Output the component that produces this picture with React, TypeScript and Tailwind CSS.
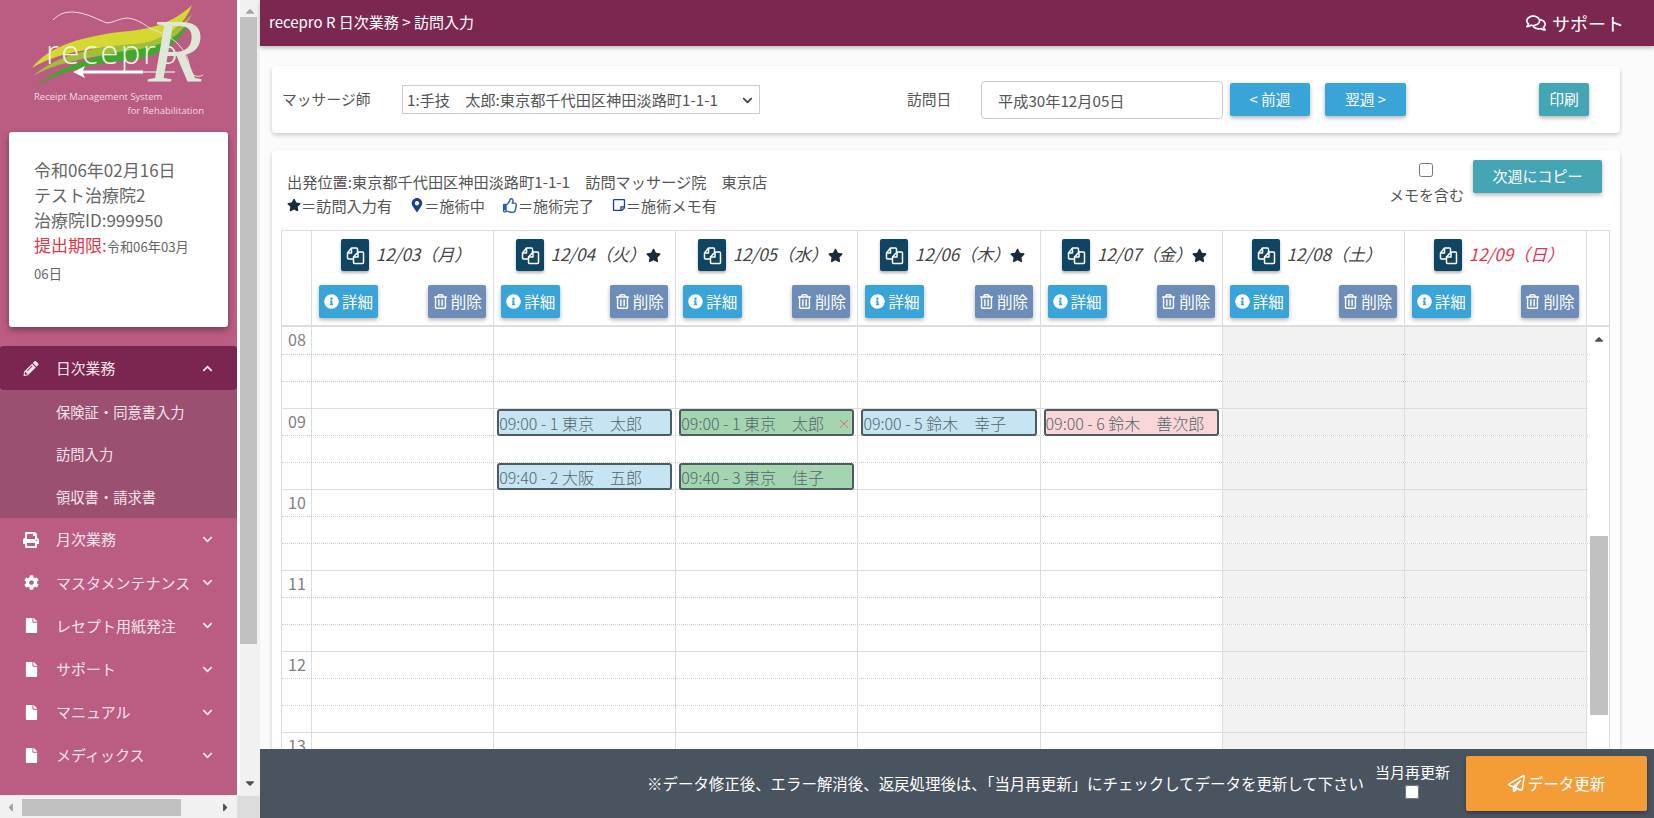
import {
  FaCaretDown,
  FaCaretLeft,
  FaCaretRight,
  FaCaretUp,
  FaChevronDown,
  FaChevronUp,
  FaCog,
  FaFile,
  FaInfoCircle,
  FaMapMarkerAlt,
  FaPencilAlt,
  FaPrint,
  FaRegComments,
  FaRegPaperPlane,
  FaRegStickyNote,
  FaRegThumbsUp,
  FaRegTrashAlt,
  FaStar,
} from "react-icons/fa";

const jp = "font-['Noto_Sans_CJK_JP','Noto_Sans',sans-serif]";

const days = [
  { date: "12/03", wd: "月", star: false, off: false, red: false },
  { date: "12/04", wd: "火", star: true, off: false, red: false },
  { date: "12/05", wd: "水", star: true, off: false, red: false },
  { date: "12/06", wd: "木", star: true, off: false, red: false },
  { date: "12/07", wd: "金", star: true, off: false, red: false },
  { date: "12/08", wd: "土", star: false, off: true, red: false },
  { date: "12/09", wd: "日", star: false, off: true, red: true },
];

type Ev = { label: string; tone: string; cancel?: boolean };

const blue = "bg-[#c6e4f1]";
const green = "bg-[#a5d4b0]";
const pink = "bg-[#fad6d9]";

// key: day index - row index (row 0 = 08:00, 20 min per row)
const events: Record<string, Ev> = {
  "1-3": { label: "09:00 - 1 東京　太郎", tone: blue },
  "2-3": { label: "09:00 - 1 東京　太郎", tone: green, cancel: true },
  "3-3": { label: "09:00 - 5 鈴木　幸子", tone: blue },
  "4-3": { label: "09:00 - 6 鈴木　善次郎", tone: pink },
  "1-5": { label: "09:40 - 2 大阪　五郎", tone: blue },
  "2-5": { label: "09:40 - 3 東京　佳子", tone: green },
};

const rows = Array.from({ length: 16 }, (_, i) => i);

const menu = [
  { label: "月次業務", icon: <FaPrint size={16} /> },
  { label: "マスタメンテナンス", icon: <FaCog size={15} /> },
  { label: "レセプト用紙発注", icon: <FaFile size={15} /> },
  { label: "サポート", icon: <FaFile size={15} /> },
  { label: "マニュアル", icon: <FaFile size={15} /> },
  { label: "メディックス", icon: <FaFile size={15} /> },
];

function Logo() {
  return (
    <div className="relative h-[132px] w-full shrink-0">
      <svg className="absolute inset-0" width="237" height="100" viewBox="0 0 237 100">
        <path d="M32 68C48 46 85 35 130 31C160 28 178 18 192 5C184 26 165 42 135 45C90 47 55 54 32 68Z" fill="#d5d832" />
        <path d="M33 76C55 56 95 46 135 44C160 42 180 28 192 14C182 36 160 50 135 52C95 55 58 62 33 76Z" fill="#9fbf3c" />
        <path d="M36 87C55 68 95 54 140 49C162 46 178 36 190 23C178 46 155 56 135 60C95 63 60 70 36 87Z" fill="#3fa82e" />
        <path d="M53 20C60 13 66 12 73 12C88 13 98 20 107 23C113 23 120 18 127 18C138 19 143 24 150 28C162 33 172 38 177 43C184 50 188 58 188 60C190 66 190 70 190 73C195 77 200 77 203 75" fill="none" stroke="#f6dce6" strokeWidth="1" />
        <path d="M73 72L85 66L83 70.500H143V71.500H175V72.500H143V73.500H83L85 78Z" fill="#ffffff" />
      </svg>
      <span className="absolute left-[46px] top-[30px] font-['Open_Sans',sans-serif] text-[33px] font-light leading-[44px] tracking-[2.5px] text-[#eef6e0]">
        recepro
      </span>
      <span className="absolute left-[148px] top-[2px] font-['Liberation_Serif',serif] text-[90px] italic leading-[100px] text-[#dfe8d6]">
        R
      </span>
      <div className="absolute left-[34px] top-[90px] w-[170px] font-['Open_Sans',sans-serif] text-[9.5px] leading-[14px] text-[#f3d9e4]">
        <div>Receipt Management System</div>
        <div className="text-right">for Rehabilitation</div>
      </div>
    </div>
  );
}

function Sidebar() {
  return (
    <div className="flex h-full w-[260px] shrink-0 flex-col bg-white">
      <div className="flex min-h-0 flex-1">
        <nav className="flex w-[237px] flex-col bg-[#bb5c82] text-[#f7e3eb]">
          <Logo />
          <div className="mx-[9px] h-[195px] w-[219px] rounded-[3px] bg-white pl-[25px] pt-[25px] text-[17px] leading-[25px] text-[#666666] shadow-[0_3px_6px_rgba(0,0,0,0.35)]">
            <div>令和06年02月16日</div>
            <div>テスト治療院2</div>
            <div>治療院ID:999950</div>
            <div className="w-[165px]">
              <span className="text-[#e0374f]">提出期限:</span>
              <span className="text-[13.2px]">令和06年03月06日</span>
            </div>
          </div>
          <div className="mt-[19px] flex h-[44px] items-center rounded-[3px] bg-[#7b2650] pl-[23px] pr-[24px] text-[14.8px]">
            <FaPencilAlt size={15} className="w-[16px] text-[#f7e3eb]" />
            <span className="ml-[17px] flex-1">日次業務</span>
            <FaChevronUp size={11} />
          </div>
          <div className="flex h-[128px] flex-col justify-around bg-[#9b5072] pl-[56px] text-[14.3px]">
            <span>保険証・同意書入力</span>
            <span>訪問入力</span>
            <span>領収書・請求書</span>
          </div>
          <div className="flex flex-col">
            {menu.map((m) => (
              <div key={m.label} className="flex h-[43.2px] items-center pl-[23px] pr-[24px] text-[15px]">
                <span className="flex w-[16px] justify-center text-white">{m.icon}</span>
                <span className="ml-[17px] flex-1 whitespace-nowrap">{m.label}</span>
                <FaChevronDown size={11} />
              </div>
            ))}
          </div>
        </nav>
        <div className="ml-[3px] flex w-[20px] flex-col items-center bg-[#f1f1f1]">
          <FaCaretUp size={14} className="mt-[4px] text-[#a3a3a3]" />
          <div className="ml-[-3px] mt-[-1px] h-[627px] w-[17px] bg-[#c1c1c1]" />
          <div className="flex-1" />
          <FaCaretDown size={14} className="mb-[5px] text-[#505050]" />
        </div>
      </div>
      <div className="flex h-[23px] border-t border-[#ececec]">
        <div className="flex w-[237px] items-center bg-[#f1f1f1]">
          <FaCaretLeft size={13} className="ml-[4px] text-[#a3a3a3]" />
          <div className="ml-[5px] h-[17px] w-[159px] bg-[#c1c1c1]" />
          <div className="flex-1" />
          <FaCaretRight size={13} className="mr-[5px] text-[#505050]" />
        </div>
        <div className="flex-1 bg-[#dcdcdc]" />
      </div>
    </div>
  );
}

function BlockBtn({ children, className }: { children: React.ReactNode; className: string }) {
  return (
    <button className={`flex items-center justify-center rounded-[2px] text-white shadow-[0_2px_4px_rgba(0,0,0,0.3)] ${className}`}>
      {children}
    </button>
  );
}

// two overlapping sheets with folded corners
function CopyIcon() {
  return (
    <svg width="20" height="20" viewBox="0 0 20 20" fill="none" stroke="currentColor" strokeWidth="1.5" strokeLinejoin="round">
      <path d="M8 14H3.500a1 1 0 0 1-1-1V8l4-5h5a1 1 0 0 1 1 1v3" />
      <path d="M6.500 3v5h-4" />
      <path d="M13 7h4.500a1 1 0 0 1 1 1v9.500a1 1 0 0 1-1 1h-8a1 1 0 0 1-1-1V12z" />
      <path d="M13 7v5H8.500" />
    </svg>
  );
}

function DayHeader({ day }: { day: (typeof days)[number] }) {
  return (
    <div className="flex h-[94px] w-[182.15px] shrink-0 flex-col border-r border-[#dddddd] px-[7px] pt-[8px]">
      <div className="flex h-[32px] items-center justify-center pl-[7px]">
        <div className="flex h-[32px] w-[28px] items-center justify-center rounded-[2px] bg-[#0f4463] text-white shadow-[0_2px_3px_rgba(0,0,0,0.3)]">
          <CopyIcon />
        </div>
        <span className={`ml-[7px] pb-[3px] text-[17px] italic ${day.red ? "text-[#e0374f]" : "text-[#444444]"}`}>
          {day.date}（{day.wd}）
        </span>
        {day.star && <FaStar size={15} className="text-[#1c2b3a]" />}
      </div>
      <div className="mt-[14px] flex justify-between">
        <BlockBtn className="h-[33px] w-[59px] gap-[3px] bg-[#39a4d8] text-[15.5px]">
          <FaInfoCircle size={15} />
          詳細
        </BlockBtn>
        <BlockBtn className="h-[33px] w-[58px] gap-[3px] bg-[#6d8db8] text-[15.5px]">
          <FaRegTrashAlt size={15} />
          削除
        </BlockBtn>
      </div>
    </div>
  );
}

function Calendar() {
  return (
    <div className="ml-[9px] mr-[10px] flex min-h-0 flex-1 flex-col overflow-hidden border-l border-t border-[#dddddd]">
      <div className="flex border-b-2 border-[#dddddd]">
        <div className="w-[30px] shrink-0 border-r border-[#dddddd]" />
        {days.map((d) => (
          <DayHeader key={d.date} day={d} />
        ))}
        <div className="flex-1 border-r border-[#dddddd]" />
      </div>
      <div className="flex min-h-0 flex-1 border-r border-[#dddddd]">
        <div className="min-w-0 flex-1">
          {rows.map((r) => (
            <div
              key={r}
              className={`flex h-[27px] ${
                r % 3 === 0 ? "border-t border-solid border-[#dddddd]" : "border-t border-dotted border-[#cccccc]"
              } ${r === 0 ? "border-t-0" : ""}`}
            >
              <div className="relative w-[30px] shrink-0 border-r border-[#dddddd] pl-[6px] text-[16px] leading-[25px] text-[#808080]">
                {r % 3 === 0 ? String(8 + r / 3).padStart(2, "0") : ""}
              </div>
              {days.map((d, i) => {
                const ev = events[`${i}-${r}`];
                return (
                  <div
                    key={d.date}
                    className={`w-[182.15px] shrink-0 border-r border-[#dddddd] px-[3px] ${d.off ? "bg-[#f2f2f2]" : ""}`}
                  >
                    {ev && (
                      <div
                        className={`flex h-[27px] items-center justify-between rounded-[3px] border-2 border-[#4d5b63] pr-[2px] text-[16px] font-light text-[#55666e] ${ev.tone}`}
                      >
                        <span className="whitespace-nowrap">{ev.label}</span>
                        {ev.cancel && <span className="text-[13px] leading-none text-[#e65a5a]">×</span>}
                      </div>
                    )}
                  </div>
                );
              })}
            </div>
          ))}
        </div>
        <div className="relative flex w-[21px] shrink-0 flex-col items-center">
          <FaCaretUp size={14} className="mt-[5px] text-[#505050]" />
          <div className="mt-[190px] h-[179px] w-[18px] bg-[#c1c1c1]" />
        </div>
      </div>
    </div>
  );
}

export default function App() {
  return (
    <div className={`flex h-[818px] w-[1654px] overflow-hidden bg-white ${jp}`}>
      <Sidebar />
      <div className="flex min-w-0 flex-1 flex-col bg-[#fbfbfb]">
        <header className="flex h-[46px] shrink-0 items-center justify-between bg-[#7b2750] pl-[9px] pr-[30px] text-white shadow-[0_2px_4px_rgba(0,0,0,0.25)]">
          <span className="pb-[2px] text-[15px]">recepro R 日次業務 &gt; 訪問入力</span>
          <span className="flex items-center gap-[6px] text-[18px]">
            <FaRegComments size={20} />
            サポート
          </span>
        </header>

        <section className="ml-[12px] mr-[34px] mt-[20px] flex h-[67px] shrink-0 items-center rounded-[4px] bg-white pl-[10px] text-[14.8px] text-[#555555] shadow-[0_2px_4px_rgba(0,0,0,0.2)]">
          <span className="w-[120px]">マッサージ師</span>
          <div className="relative">
            <select className="block h-[29px] w-[358px] appearance-none border border-[#cccccc] bg-white pl-[4px] text-[15.2px] text-[#555555]">
              <option>1:手技　太郎:東京都千代田区神田淡路町1-1-1</option>
            </select>
            <FaChevronDown size={11} className="pointer-events-none absolute right-[7px] top-[10px] text-[#444444]" />
          </div>
          <span className="ml-[147px] w-[74px]">訪問日</span>
          <input
            readOnly
            value="平成30年12月05日"
            className="h-[38px] w-[242px] rounded-[4px] border border-[#cccccc] px-[16px] text-[15.2px] text-[#555555]"
          />
          <BlockBtn className="ml-[7px] h-[33px] w-[80px] bg-[#39a4d8]">&lt; 前週</BlockBtn>
          <BlockBtn className="ml-[15px] h-[33px] w-[81px] bg-[#39a4d8]">翌週 &gt;</BlockBtn>
          <BlockBtn className="ml-[133px] h-[33px] w-[50px] bg-[#44a5b5]">印刷</BlockBtn>
        </section>

        <section className="ml-[12px] mr-[34px] mt-[17px] flex min-h-0 flex-1 flex-col rounded-t-[4px] bg-white text-[15.2px] text-[#555555] shadow-[0_2px_4px_rgba(0,0,0,0.2)]">
          <div className="flex h-[80px] shrink-0 pl-[15px] pr-[18px]">
            <div className="flex-1 pt-[19px] leading-[24px]">
              <div>出発位置:東京都千代田区神田淡路町1-1-1　訪問マッサージ院　東京店</div>
              <div className="flex items-center">
                <FaStar size={14} className="text-[#1c2b3a]" />
                <span>＝訪問入力有</span>
                <FaMapMarkerAlt size={14} className="ml-[18px] text-[#1c3f8f]" />
                <span>＝施術中</span>
                <FaRegThumbsUp size={15} className="ml-[18px] text-[#2b5cc0]" />
                <span>＝施術完了</span>
                <FaRegStickyNote size={14} className="ml-[18px] text-[#1c3f8f]" />
                <span>＝施術メモ有</span>
              </div>
            </div>
            <div className="flex flex-col items-center pt-[13px]">
              <input type="checkbox" className="h-[14px] w-[14px]" />
              <span className="mt-[7px] text-[15px]">メモを含む</span>
            </div>
            <BlockBtn className="ml-[9px] mt-[10px] h-[33px] w-[129px] bg-[#44a5b5] text-[15px]">次週にコピー</BlockBtn>
          </div>
          <Calendar />
        </section>

        <footer className="flex h-[69px] shrink-0 items-center justify-end bg-[#4a5360] pr-[7px] text-white">
          <span className="text-[15.45px]">※データ修正後、エラー解消後、返戻処理後は、「当月再更新」にチェックしてデータを更新して下さい</span>
          <div className="mb-[7px] ml-[11px] flex flex-col items-center text-[15px] leading-[20px]">
            <span>当月再更新</span>
            <input type="checkbox" className="mt-[3px] h-[14px] w-[14px]" />
          </div>
          <BlockBtn className="ml-[16px] h-[55px] w-[181px] gap-[3px] bg-[#f49d37] text-[15.5px]">
            <FaRegPaperPlane size={17} />
            データ更新
          </BlockBtn>
        </footer>
      </div>
    </div>
  );
}
